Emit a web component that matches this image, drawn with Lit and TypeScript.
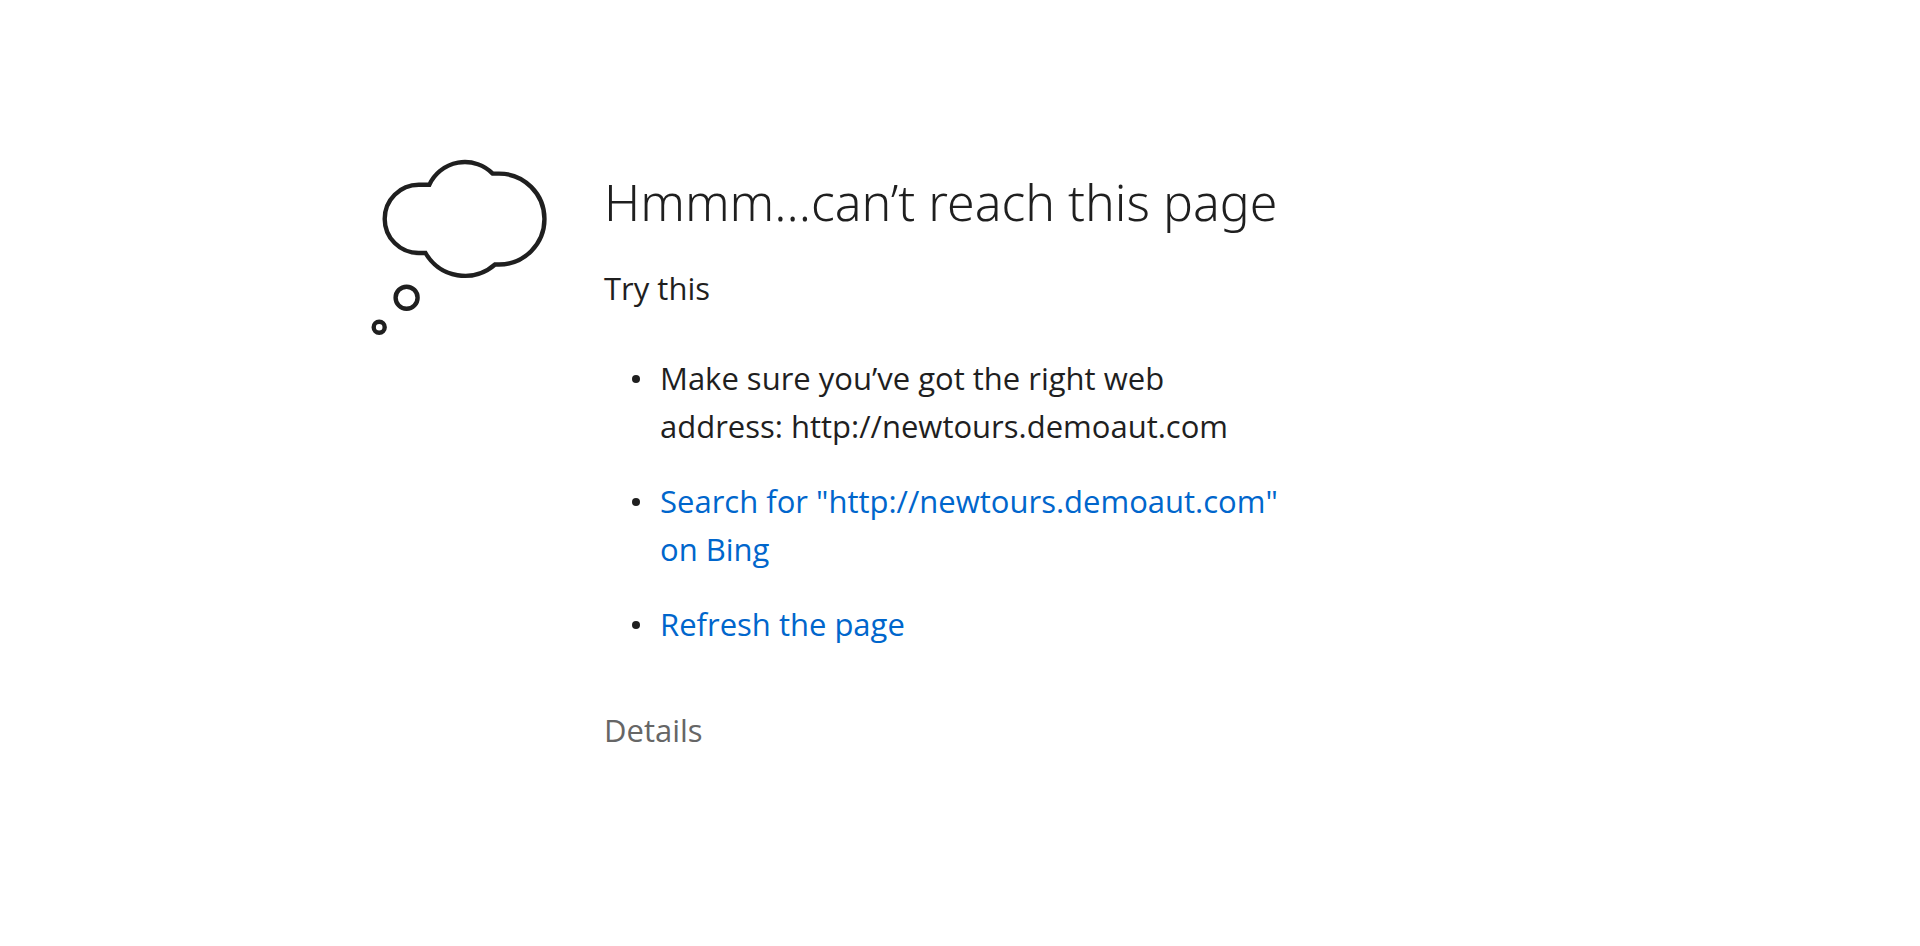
import { LitElement, html, css } from "lit";
import { customElement, property } from "lit/decorators.js";

@customElement("thought-cloud")
export class ThoughtCloud extends LitElement {
  static styles = css`
    :host {
      display: block;
    }
    .cloud {
      display: block;
      width: 100%;
      height: auto;
      fill: none;
      stroke: #1f1f1f;
      stroke-width: 4.4;
      stroke-miterlimit: 10;
    }
  `;

  render() {
    return html`
      <svg class="cloud" viewBox="11 9 177 177" aria-hidden="true">
        <path
          d="M69.3 34.8H58.8A34.1 34.1 0 0 0 58.8 103H65.5A45.4 45.4 0 0 0 135 114.5H139A45.4 45.4 0 0 0 139 23.6H132.7A39.2 39.2 0 0 0 69.3 34.8Z"
        />
        <circle cx="46.6" cy="147.7" r="11" />
        <circle cx="19.2" cy="177.3" r="5.5" />
      </svg>
    `;
  }
}

@customElement("app-root")
export class AppRoot extends LitElement {
  @property() address = "http://newtours.demoaut.com";

  static styles = css`
    :host {
      display: block;
      min-height: 100vh;
      box-sizing: border-box;
      padding: 159px 24px 48px;
      background: #fff;
      color: #1f1f1f;
      font-family: "Segoe UI", "Open Sans", "Noto Sans", sans-serif;
      font-size: 31px;
      line-height: 48px;
    }
    .page {
      display: flex;
      align-items: flex-start;
      gap: 56px;
      max-width: 1178px;
      margin: 0 auto;
    }
    .picture {
      flex: 0 0 177px;
    }
    .content {
      flex: 1 1 0;
      max-width: 682px;
      padding-top: 11px;
    }
    .title {
      margin: 0 0 30px;
      font-family: "Segoe UI", "Noto Sans", "Open Sans", sans-serif;
      font-size: 50px;
      line-height: 64px;
      font-weight: 300;
    }
    .subtitle {
      margin: 0 0 42px;
      font-size: inherit;
      font-weight: 400;
    }
    .tips {
      display: grid;
      gap: 27px;
      margin: 0 0 58px;
      padding: 0 0 0 28px;
      list-style: none;
    }
    .tip {
      display: flex;
      align-items: flex-start;
      gap: 20px;
    }
    .tip::before {
      content: "";
      flex: none;
      width: 8px;
      height: 8px;
      margin-top: 21px;
      border-radius: 50%;
      background: currentColor;
    }
    .link {
      color: #0066cc;
      text-decoration: none;
    }
    .link:hover {
      text-decoration: underline;
    }
    .details {
      padding: 0;
      border: 0;
      background: none;
      color: #666;
      font: inherit;
      cursor: pointer;
    }
  `;

  render() {
    return html`
      <main class="page">
        <thought-cloud class="picture"></thought-cloud>
        <div class="content">
          <h1 class="title">Hmmm...can’t reach this page</h1>
          <h2 class="subtitle">Try this</h2>
          <ul class="tips">
            <li class="tip">
              <span>Make sure you’ve got the right web address: ${this.address}</span>
            </li>
            <li class="tip">
              <a class="link" href="#search">Search for "${this.address}" on Bing</a>
            </li>
            <li class="tip">
              <a class="link" href="#refresh">Refresh the page</a>
            </li>
          </ul>
          <button class="details" type="button">Details</button>
        </div>
      </main>
    `;
  }
}
